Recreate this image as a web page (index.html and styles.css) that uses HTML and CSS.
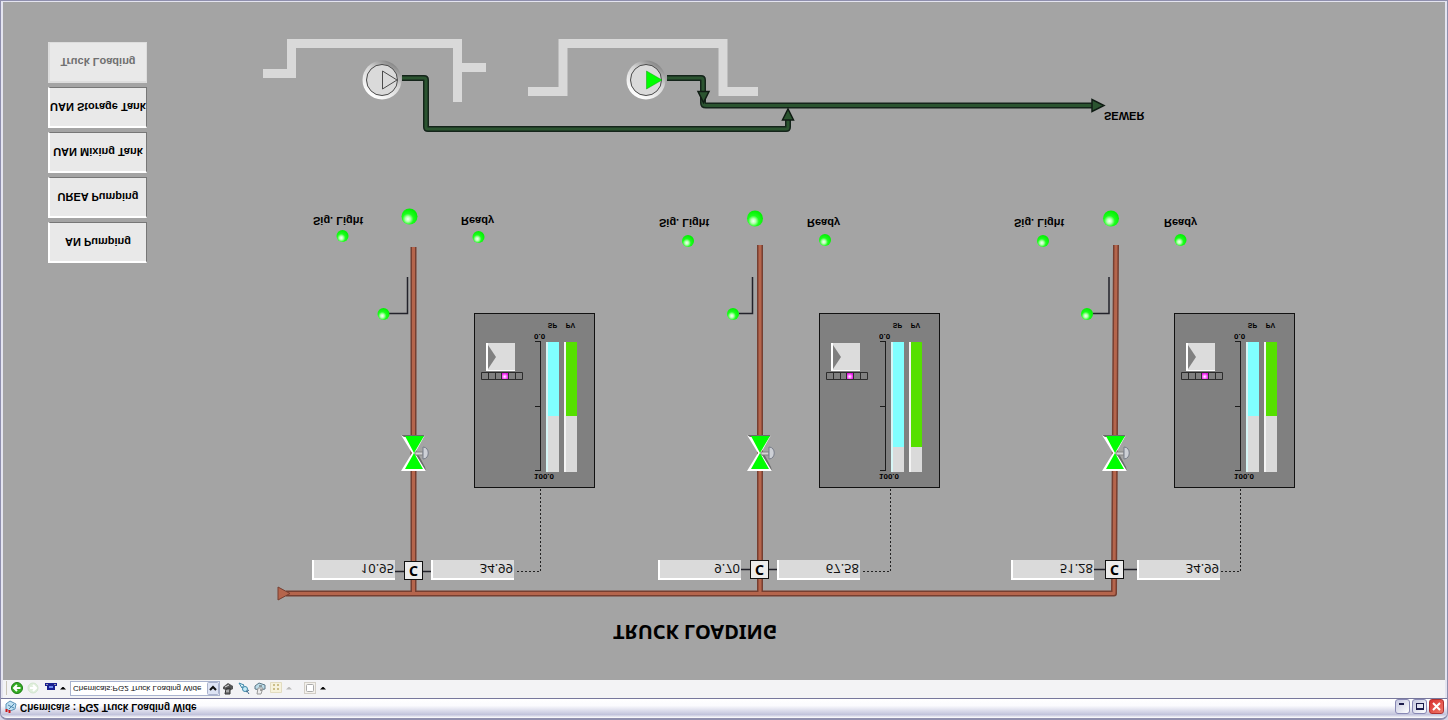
FILE: index.html
```html
<!DOCTYPE html>
<html lang="en">
<head>
<meta charset="utf-8">
<title>Chemicals : PG2 Truck Loading Wide</title>
<link rel="stylesheet" href="styles.css">
</head>
<body>
<div class="window">
  <main class="mimic">
    <svg class="drawing" width="1448" height="680" viewBox="0 0 1448 680" aria-hidden="true">
      <defs>
        <radialGradient id="lampFill" cx="0.4" cy="0.66" r="0.62">
          <stop offset="0" stop-color="#f4fff4"/><stop offset="0.25" stop-color="#b4ffb0"/>
          <stop offset="0.55" stop-color="#1cff1c"/><stop offset="1" stop-color="#04f004"/>
        </radialGradient>
        <linearGradient id="pumpRim" x1="0.2" y1="0.9" x2="0.75" y2="0.05">
          <stop offset="0" stop-color="#ffffff"/><stop offset="0.6" stop-color="#d4d4d4"/><stop offset="1" stop-color="#858585"/>
        </linearGradient>
        <g id="pump">
          <circle r="19.5" fill="url(#pumpRim)"/>
          <circle r="15.5" fill="#dadada" stroke="#4a4a4a"/>
        </g>
        <g id="valve">
          <path d="M-13-18H11L1 0L12 18H-13L-2 0Z" fill="#fff"/>
          <path d="M-13-18H11L9-16H-10ZM12 18L1 0L3-1L11 14Z" fill="#6c6c6c"/>
          <path d="M1-1H9V2H1Z" fill="#d4d4d4" stroke="#858585" stroke-width="1"/>
          <path d="M9-6C16-6 16 6 9 6Z" fill="#cdd0d6" stroke="#777c88"/>
          <path d="M-9-17H10L0 0L9 16H-9L0 0Z" fill="#00ff00"/>
        </g>
      </defs>

      <g fill="none" stroke="#d9d9d9" stroke-width="9">
        <path d="M263 73.500H291.500V43.500H457.500V102M457.500 67.500H486"/>
        <path d="M528 91.500H563V43.500H723V91.500H758"/>
      </g>
      <g fill="none" stroke-linejoin="round">
        <path d="M402 78H424Q426 78 426 80V127Q426 129 428 129H786Q788 129 788 127V118M667 78H701Q703 78 703 80V103Q703 105.500 706 105.500H1094" stroke="#14241a" stroke-width="6"/>
        <path d="M402 78H424Q426 78 426 80V127Q426 129 428 129H786Q788 129 788 127V118M667 78H701Q703 78 703 80V103Q703 105.500 706 105.500H1094" stroke="#2b5430" stroke-width="3"/>
      </g>
      <g fill="#2b5430" stroke="#101c14" stroke-width="1.500">
        <path d="M698 91.500H709L703.500 102.500Z"/>
        <path d="M782.500 120H793.500L788 109Z"/>
        <path d="M1092 99.500V111.500L1104 105.500Z"/>
      </g>
      <use href="#pump" x="382" y="80"/>
      <path d="M382.500 71V89L397 80Z" fill="#dadada" stroke="#4a4a4a"/>
      <use href="#pump" x="646" y="80"/>
      <path d="M646.500 71V89L662 80Z" fill="#00ff00" stroke="#11a011" stroke-width="0.500"/>

      <g fill="none" stroke-linejoin="round">
        <path d="M413.500 247V593M760 245V593M1116 245L1114 593.500H286" stroke="#763f31" stroke-width="6"/>
        <path d="M413.500 247V593M760 245V593M1116 245L1114 593.500H286" stroke="#b5654c" stroke-width="3"/>
      </g>
      <path d="M278 587L290 593.500L278 600Z" fill="#b5654c" stroke="#763f31"/>
      <use href="#valve" x="414" y="453"/>
      <use href="#valve" x="760" y="453"/>
      <use href="#valve" x="1115" y="453"/>

      <g fill="none" stroke="#22222a" stroke-width="1.500">
        <path d="M389 313.500H407.500V277M739 313.500H752.500V277M1093 313.500H1109V277"/>
        <path d="M395 571.500H431M741 569.500H777M1094 569.500H1137"/>
      </g>
      <g fill="none" stroke="#222" stroke-dasharray="2 2">
        <path d="M540.500 489V571.500H515M890.500 489V571.500H861M1240.500 489V571.500H1221"/>
      </g>
      <g fill="url(#lampFill)">
        <circle cx="409.500" cy="216.500" r="8"/><circle cx="755" cy="218.500" r="8"/><circle cx="1111" cy="218.500" r="8"/>
        <circle cx="342.500" cy="236" r="6"/><circle cx="478.500" cy="237" r="6"/><circle cx="383.500" cy="314" r="6"/>
        <circle cx="688" cy="241" r="6"/><circle cx="825" cy="240" r="6"/><circle cx="733" cy="314" r="6"/>
        <circle cx="1043" cy="241" r="6"/><circle cx="1180.500" cy="240" r="6"/><circle cx="1087" cy="314" r="6"/>
      </g>
    </svg>

    <nav class="pages">
      <button type="button" disabled><span class="mirror">Truck Loading</span></button>
      <button type="button"><span class="mirror">UAN Storage Tank</span></button>
      <button type="button"><span class="mirror">UAN Mixing Tank</span></button>
      <button type="button"><span class="mirror">UREA Pumping</span></button>
      <button type="button"><span class="mirror">AN Pumping</span></button>
    </nav>

    <span class="label sewer mirror">SEWER</span>

    <section class="station bay-1">
      <span class="label signal mirror">Sig. Light</span>
      <span class="label ready mirror">Ready</span>
      <div class="panel">
        <svg class="faceplate" width="42" height="38" viewBox="0 0 42 38" aria-hidden="true"><use href="#plate"/></svg>
        <div class="scale"><span class="mirror">0.0</span><i></i><span class="mirror">100.0</span></div>
        <div class="level sp"><span class="mirror">SP</span><div class="track"><div class="fill" style="height:57%"></div></div></div>
        <div class="level pv"><span class="mirror">PV</span><div class="track"><div class="fill" style="height:57%"></div></div></div>
      </div>
      <input class="value flow mirror" aria-label="Bay 1 flow" value="10.95" readonly>
      <span class="controller">C</span>
      <input class="value total mirror" aria-label="Bay 1 position" value="34.99" readonly>
    </section>

    <section class="station bay-2">
      <span class="label signal mirror">Sig. Light</span>
      <span class="label ready mirror">Ready</span>
      <div class="panel">
        <svg class="faceplate" width="42" height="38" viewBox="0 0 42 38" aria-hidden="true"><use href="#plate"/></svg>
        <div class="scale"><span class="mirror">0.0</span><i></i><span class="mirror">100.0</span></div>
        <div class="level sp"><span class="mirror">SP</span><div class="track"><div class="fill" style="height:81%"></div></div></div>
        <div class="level pv"><span class="mirror">PV</span><div class="track"><div class="fill" style="height:81%"></div></div></div>
      </div>
      <input class="value flow mirror" aria-label="Bay 2 flow" value="9.70" readonly>
      <span class="controller">C</span>
      <input class="value total mirror" aria-label="Bay 2 position" value="67.58" readonly>
    </section>

    <section class="station bay-3">
      <span class="label signal mirror">Sig. Light</span>
      <span class="label ready mirror">Ready</span>
      <div class="panel">
        <svg class="faceplate" width="42" height="38" viewBox="0 0 42 38" aria-hidden="true"><use href="#plate"/></svg>
        <div class="scale"><span class="mirror">0.0</span><i></i><span class="mirror">100.0</span></div>
        <div class="level sp"><span class="mirror">SP</span><div class="track"><div class="fill" style="height:57%"></div></div></div>
        <div class="level pv"><span class="mirror">PV</span><div class="track"><div class="fill" style="height:57%"></div></div></div>
      </div>
      <input class="value flow mirror" aria-label="Bay 3 flow" value="51.28" readonly>
      <span class="controller">C</span>
      <input class="value total mirror" aria-label="Bay 3 position" value="34.99" readonly>
    </section>

    <h1 class="heading mirror">TRUCK LOADING</h1>

    <svg class="symbols" width="0" height="0" aria-hidden="true">
      <defs>
        <radialGradient id="pinkFill" cx="0.45" cy="0.6" r="0.6">
          <stop offset="0" stop-color="#fff"/><stop offset="0.4" stop-color="#ff8cff"/><stop offset="1" stop-color="#e010e0"/>
        </radialGradient>
        <g id="plate">
          <path d="M5 0H34V28H5Z" fill="#fff"/><path d="M7 0H34V27H7Z" fill="#dcdcdc"/>
          <path d="M7 2L15 14L7 26Z" fill="#808080"/>
          <path d="M.5 29.500H41.500V36.500H.5ZM7.500 29V37M14.500 29V37M20.500 29V37M27.500 29V37M34.500 29V37" fill="none" stroke="#2c2c2c"/>
          <rect x="21" y="30" width="6" height="6" fill="url(#pinkFill)"/>
        </g>
      </defs>
    </svg>
  </main>

  <div class="toolbar">
    <span class="grip"></span>
    <button type="button" aria-label="Back"><svg width="12" height="12" viewBox="0 0 12 12"><circle cx="6" cy="6" r="5.500" fill="#35ad24" stroke="#1c7d12"/><path d="M9.500 6H3.500M6 3L3 6L6 9" fill="none" stroke="#fff" stroke-width="2"/></svg></button>
    <button type="button" aria-label="Forward"><svg width="12" height="12" viewBox="0 0 12 12"><circle cx="6" cy="6" r="5" fill="#e0efdc" stroke="#d2e4ce"/><path d="M3 6H8.500M6 3L9 6L6 9" fill="none" stroke="#fff" stroke-width="2"/></svg></button>
    <button class="display" type="button" aria-label="Display"><svg width="12" height="12" viewBox="0 0 12 12"><path d="M0 1H12V4H10V8H2V4H0Z" fill="#1a2090"/><path d="M4 4H8V6H4Z" fill="#6d8cf0"/><path d="M1 2.500H3M9 2.500H11" stroke="#99a"/></svg></button>
    <span class="caret"></span>
    <div class="address">
      <select class="mirror" aria-label="Display page"><option>Chemicals:PG2 Truck Loading Wide</option></select>
      <svg class="drop" width="12" height="13" viewBox="0 0 12 13" aria-hidden="true"><rect x=".5" y=".5" width="11" height="12" rx="1" fill="#dde3f4" stroke="#aab2cc"/><path d="M3 8L6 5L9 8" fill="none" stroke="#111" stroke-width="2"/></svg>
    </div>
    <button type="button" aria-label="Print"><svg width="12" height="13" viewBox="0 0 12 13"><path d="M1 5L6 1L11 4V7L7 9L1 7Z" fill="#555"/><path d="M4 7L8 6L8 12H3Z" fill="#777" stroke="#333"/><path d="M3 5L7 3M4 9H7" stroke="#ddd"/></svg></button>
    <button type="button" aria-label="Connect"><svg width="12" height="13" viewBox="0 0 12 13"><path d="M1 1L4 6L6 3Z" fill="#dff4fb" stroke="#3d87a8"/><circle cx="7" cy="7" r="2.500" fill="#c5ebf8" stroke="#3d87a8"/><path d="M9 9L11 12M8 10L11 8" stroke="#3d6688"/></svg></button>
    <button type="button" aria-label="Acknowledge"><svg width="12" height="13" viewBox="0 0 12 13"><path d="M1 4L5 1L11 3L11 7L6 8L1 7Z" fill="#bcdce9" stroke="#5c7786"/><path d="M4 6H9L7 12H3Z" fill="#eee" stroke="#999"/><path d="M5 4H8M6 8H8" stroke="#555"/></svg></button>
    <button type="button" aria-label="Layout" disabled><svg width="12" height="12" viewBox="0 0 12 12"><path d="M.5 .5H11.500V10.500H.5Z" fill="#f6f2dc" stroke="#e2dcc0"/><path d="M3 3H5M7 3H9M3 7H5M7 7H9" stroke="#cbbf88" stroke-width="2"/></svg></button>
    <span class="caret faint"></span>
    <button class="box" type="button" aria-label="Frame"><svg width="12" height="12" viewBox="0 0 12 12"><rect x=".5" y=".5" width="11" height="11" fill="#f4f1ec" stroke="#d2cec6"/><rect x="2.500" y="2.500" width="7" height="7" rx="1" fill="#fff" stroke="#aaa"/></svg></button>
    <span class="caret"></span>
  </div>

  <header class="titlebar">
    <svg width="12" height="13" viewBox="0 0 12 13" aria-hidden="true"><path d="M1 4L5 1L11 4L10 9L5 11L1 9Z" fill="#bfe0f2" stroke="#5b93b8"/><path d="M3 5L9 8M9 4L4 9" stroke="#4b86ae"/><path d="M1.500 9V12M4.500 10V13" stroke="#d01818" stroke-width="2"/></svg>
    <span class="title mirror">Chemicals : PG2 Truck Loading Wide</span>
    <div class="controls">
      <button type="button" aria-label="Minimize"><svg width="13" height="13" viewBox="0 0 13 13"><path d="M3 4H8" stroke="#1b1b4a" stroke-width="2"/></svg></button>
      <button type="button" aria-label="Maximize"><svg width="13" height="13" viewBox="0 0 13 13"><path d="M3.500 3V9.500H10.500V3M3 3.500H11" fill="none" stroke="#1b1b4a"/><path d="M3 9H11" stroke="#1b1b4a" stroke-width="2"/></svg></button>
      <button class="close" type="button" aria-label="Close"><svg width="13" height="13" viewBox="0 0 13 13"><path d="M3 3L10 10M10 3L3 10" stroke="#fff" stroke-width="2"/></svg></button>
    </div>
  </header>
</div>
</body>
</html>
```
FILE: styles.css
```css
* { box-sizing: border-box; }
body {
  margin: 0;
  background: #d5d5e8;
  color: #000;
  font-family: "Liberation Sans", Arial, sans-serif;
}
button { padding: 0; border: 0; background: none; font: inherit; color: inherit; }
button svg { display: block; }

.mirror { transform: scaleY(-1); }

.window {
  display: flex;
  flex-direction: column;
  min-height: 100vh;
  border: solid #8f8fae;
  border-width: 1px 1px 2px;
  border-radius: 0 0 7px 7px;
  background: #e4e4f0;
  overflow: hidden;
}

.mimic {
  position: relative;
  flex: 1;
  margin: 1px 2px 0;
  background: #a4a4a4;
}
.drawing { position: absolute; top: -2px; left: -3px; }
.symbols { position: absolute; }

.pages {
  position: absolute;
  top: 40px;
  left: 45px;
  display: flex;
  flex-direction: column;
  gap: 4px;
  width: 99px;
}
.pages button {
  height: 41px;
  border: 1px solid #777;
  border-left: 2px solid #fff;
  border-bottom: 2px solid #fff;
  background: #e9e9e9;
  font-size: 11px;
  font-weight: bold;
  white-space: nowrap;
}
.pages button span { display: block; }
.pages button:disabled { border-color: #ddd; color: #707070; }

.label {
  position: absolute;
  font-size: 11px;
  line-height: 14px;
  font-weight: bold;
  white-space: nowrap;
}
.sewer { left: 1101px; top: 107px; }
.heading {
  position: absolute;
  left: 610px;
  top: 616px;
  margin: 0;
  font: bold 20px/28px "Noto Sans", sans-serif;
  white-space: nowrap;
}

.station { position: absolute; top: 0; width: 290px; height: 590px; }
.bay-1 { left: 309px; }
.bay-2 { left: 655px; }
.bay-3 { left: 1008px; }
.signal { left: 1px; top: 214px; }
.ready { left: 149px; top: 214px; }
.bay-1 .signal, .bay-1 .ready { top: 212px; }
.bay-3 .signal { left: 3px; }
.bay-3 .ready { left: 153px; }

.panel {
  position: absolute;
  left: 162px;
  top: 311px;
  display: flex;
  align-items: flex-start;
  width: 121px;
  height: 175px;
  padding: 6px 0 0 6px;
  border: 1px solid #111;
  background: #808080;
  font-weight: bold;
  font-size: 8px;
  line-height: 10px;
}
.bay-2 .panel { left: 161px; }
.bay-3 .panel { left: 163px; }
.faceplate { margin: 23px 11px 0 0; }
.scale { width: 12px; margin-top: 11px; }
.scale span { display: block; width: 20px; }
.scale i {
  display: block;
  width: 6px;
  height: 130px;
  margin-left: 1px;
  border: solid #1c1c1c;
  border-width: 1px 1px 1px 0;
  background: linear-gradient(#1c1c1c, #1c1c1c) 0 50% / 6px 1px no-repeat;
}
.level { width: 13px; margin-right: 5px; text-align: center; }
.level span { display: block; font-size: 7px; }
.track {
  height: 130px;
  margin-top: 12px;
  border-left: 2px solid #f4f4f4;
  background: #dadada;
}
.sp .track { border-left-color: #d6f6f6; }
.sp .fill { background: #80ffff; }
.pv .fill { background: #55e000; }

.value {
  position: absolute;
  top: 558px;
  width: 83px;
  height: 20px;
  padding: 0 1px 0 0;
  border: solid #fff;
  border-width: 2px 0 0 2px;
  background: #dadada;
  font: 13px/16px "Noto Sans", sans-serif;
  text-align: right;
  color: #111;
}
.flow { left: 0; }
.total { left: 119px; }
.bay-3 .total { left: 126px; }
.controller {
  position: absolute;
  left: 92px;
  top: 558px;
  width: 19px;
  height: 19px;
  border: 1px solid #111;
  background: #ececec;
  font: bold 14px/17px "Noto Sans", sans-serif;
  text-align: center;
}
.bay-1 .controller { top: 559px; }
.bay-3 .controller { left: 94px; }

.toolbar {
  display: flex;
  align-items: center;
  gap: 4px;
  height: 18px;
  margin: 0 2px;
  padding: 0 0 2px 3px;
  background: #f3f3f5;
}
.grip { width: 1px; height: 14px; border-left: 1px solid #c9c5b8; }
.caret {
  width: 6px;
  height: 3px;
  background: #000;
  clip-path: polygon(50% 0, 100% 100%, 0 100%);
}
.display { margin-left: 2px; }
.display + .caret { margin-left: -1px; }
.faint { background: #bbb; }
.box { margin-left: 8px; }
.address {
  display: flex;
  align-items: center;
  width: 150px;
  height: 15px;
  border: 1px solid #a9b3cf;
  background: #fff;
}
.address + button { margin-left: -2px; }
.address select {
  flex: 1;
  min-width: 0;
  height: 13px;
  padding: 0 0 0 2px;
  border: 0;
  appearance: none;
  background: transparent;
  color: #111;
  font: 8px/13px "Liberation Sans", Arial, sans-serif;
}

.titlebar {
  display: flex;
  align-items: center;
  gap: 3px;
  height: 20px;
  padding: 0 3px 4px 4px;
  border-top: 1px solid #77779c;
  background: linear-gradient(#fff 0, #fbfbfe 35%, #c2c3dc 82%, #fff 100%);
}
.title { font-size: 10px; line-height: 14px; font-weight: bold; white-space: nowrap; }
.controls { display: flex; gap: 2px; margin-left: auto; }
.controls button {
  border: 1px solid #8888b4;
  border-radius: 3px;
  background: linear-gradient(135deg, #c6c8e0, #fff);
}
.controls .close { border-color: #b03030; background: linear-gradient(135deg, #d83030, #f07868); }
```
